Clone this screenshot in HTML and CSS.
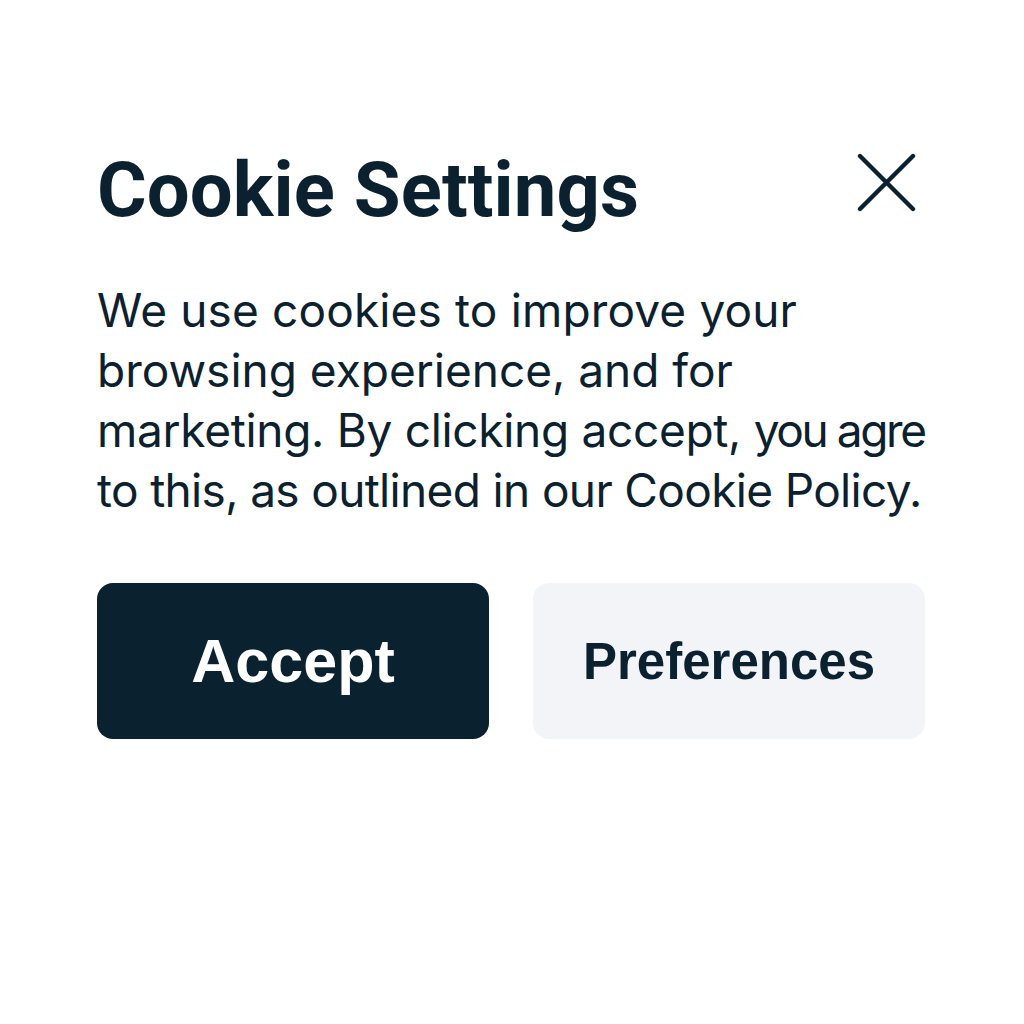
FILE: index.html
```html
<!DOCTYPE html>
<html lang="en">
<head>
<meta charset="utf-8">
<title>Cookie Settings</title>
<link rel="stylesheet" href="styles.css">
</head>
<body>
<div class="dialog">
  <div class="header">
    <h1 class="title">Cookie Settings</h1>
    <button class="close" aria-label="Close">
      <svg width="60" height="60" viewBox="0 0 60 60"><path d="M3 3 L56 56 M56 3 L3 56" stroke="#0b2130" stroke-width="4.4" stroke-linecap="round" fill="none"/></svg>
    </button>
  </div>
  <p class="body"><span class="l1">We use cookies to improve your</span><br><span class="l2">browsing experience, and for</span><br><span class="l3">marketing. By clicking accept, </span><span class="tight">you agre</span><br><span class="l4">to this, as outlined in our Cookie Policy.</span></p>
  <div class="actions">
    <button class="btn btn-primary">Accept</button>
    <button class="btn btn-secondary">Preferences</button>
  </div>
</div>
</body>
</html>
```
FILE: styles.css
```css
html, body { margin: 0; padding: 0; background: #ffffff; }
body { width: 1024px; height: 1024px; color: #0b2130; font-family: Roboto, "Liberation Sans", sans-serif; }
.dialog { padding: 148px 99px 0 97px; }
.header { display: flex; justify-content: space-between; align-items: flex-start; }
.title { margin: 0; font-family: Roboto, sans-serif; font-weight: 700; font-size: 76px; line-height: 84px; color: #0b2130; letter-spacing: 0.1px; }
.close { background: none; border: 0; padding: 0; margin: 5px 8px 0 0; width: 60px; height: 60px; cursor: pointer; }
.close svg { display: block; }
.body { margin: 48px 0 0 0; font-family: Inter, sans-serif; font-size: 46px; line-height: 60px; color: #0b2130; white-space: nowrap; }
.l1 { letter-spacing: 0.15px; }
.l3 { letter-spacing: -0.3px; }
.tight { letter-spacing: -2.4px; }
.l4 { letter-spacing: -0.65px; }
.actions { display: flex; gap: 44px; margin-top: 63px; }
.btn { width: 392px; height: 156px; border-radius: 16px; border: 0; font-family: "Liberation Sans", Arial, sans-serif; font-weight: 700; font-size: 61px; }
.btn-primary { background: #0a2130; color: #ffffff; }
.btn-secondary { background: #f3f4f7; color: #0b2130; font-size: 51px; }
```
